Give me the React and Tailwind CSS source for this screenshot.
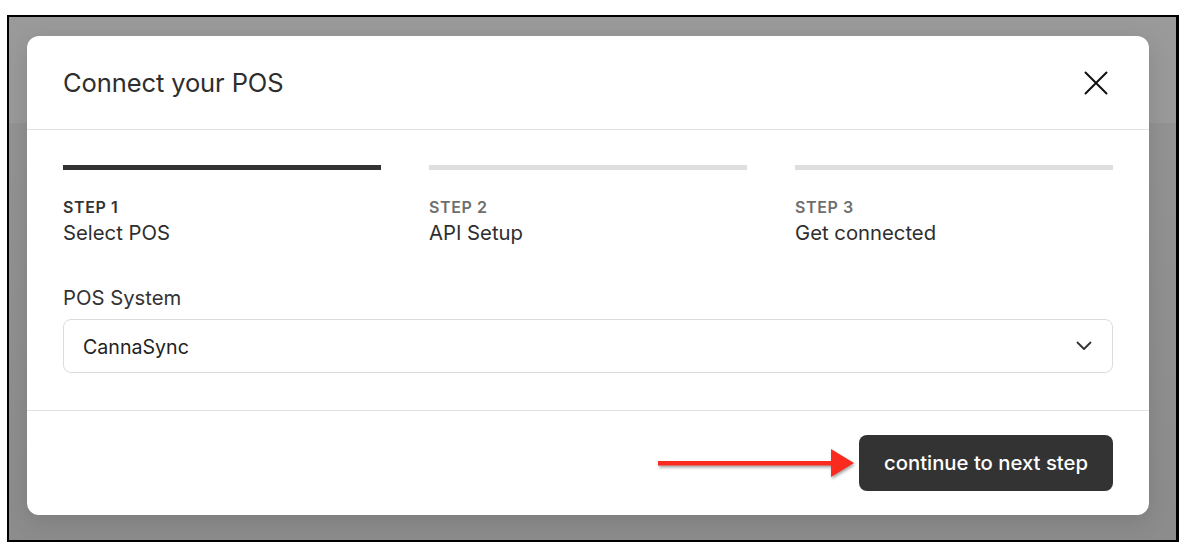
import React from 'react';

const steps = [
    { n: 'STEP 1', label: 'Select POS', active: true },
    { n: 'STEP 2', label: 'API Setup', active: false },
    { n: 'STEP 3', label: 'Get connected', active: false },
];

const RedArrow = () => (
    <svg width="200" height="34" viewBox="0 0 200 34" className="drop-shadow-[1px_2px_1.5px_rgba(0,0,0,0.35)]">
        <rect x="1" y="15" width="176" height="4.5" fill="#fb2a1f" />
        <polygon points="174,3 197,17 174,31" fill="#fb2a1f" />
    </svg>
);

export default function App() {
    return (
        <div className="w-[1192px] h-[554px] bg-white pt-[15px] pl-[7px] font-['Inter','Noto_Sans',sans-serif]">
            <div className="w-[1172px] h-[527px] border-2 border-r-[3px] border-black bg-[linear-gradient(to_bottom,#9a9a9a_106px,#939393_106px,#8c8c8c_100%)] pt-[19px] pl-[18px]">
                <div className="w-[1122px] h-[479px] bg-white rounded-[12px] shadow-[0_6px_24px_rgba(0,0,0,0.12)] flex flex-col">
                    {/* header */}
                    <div className="h-[94px] shrink-0 flex items-center justify-between pl-[36px] pr-[41px] border-b border-[#e2e2e2]">
                        <h2 className="text-[25.5px] leading-[32px] pt-[1px] font-normal text-[#2e2e2e] tracking-[-0.1px]">Connect your POS</h2>
                        <button className="w-[24px] h-[24px] flex items-center justify-center">
                            <svg width="24" height="24" viewBox="0 0 24 24" fill="none" stroke="#111" strokeWidth="2" strokeLinecap="round">
                                <path d="M1.5 1.5L22.5 22.5M22.5 1.5L1.5 22.5" />
                            </svg>
                        </button>
                    </div>

                    {/* body */}
                    <div className="px-[36px] pt-[35px] pb-[37px] border-b border-[#e2e2e2]">
                        <div className="grid grid-cols-3 gap-[48px]">
                            {steps.map((s) => (
                                <div key={s.n}>
                                    <div className={`h-[5px] ${s.active ? 'bg-[#333333]' : 'bg-[#dedede]'}`} />
                                    <div className={`mt-[27px] text-[16px] leading-[20px] font-semibold tracking-[0.6px] ${s.active ? 'text-[#333333]' : 'text-[#6e6e6e]'}`}>{s.n}</div>
                                    <div className="mt-[4px] text-[20.3px] leading-[24px] text-[#2e2e2e]">{s.label}</div>
                                </div>
                            ))}
                        </div>

                        <label className="block mt-[41px] text-[20.3px] leading-[24px] text-[#333333]">POS System</label>
                        <div className="mt-[9px] h-[54px] rounded-[8px] border border-[#dcdcdc] flex items-center justify-between pl-[19px] pr-[20px]">
                            <span className="text-[19.6px] leading-[24px] pt-[2px] text-[#222222]">CannaSync</span>
                            <svg width="16" height="10" viewBox="0 0 16 10" fill="none" stroke="#333" strokeWidth="1.8" strokeLinecap="round" strokeLinejoin="round">
                                <path d="M1.5 1.5L8 8L14.5 1.5" />
                            </svg>
                        </div>
                    </div>

                    {/* footer */}
                    <div className="flex-1 flex items-center justify-end gap-[2px] px-[36px]">
                        <RedArrow />
                        <button className="h-[56px] w-[254px] rounded-[8px] bg-[#333333] text-white text-[20.3px] font-medium">
                            continue to next step
                        </button>
                    </div>
                </div>
            </div>
        </div>
    );
}
